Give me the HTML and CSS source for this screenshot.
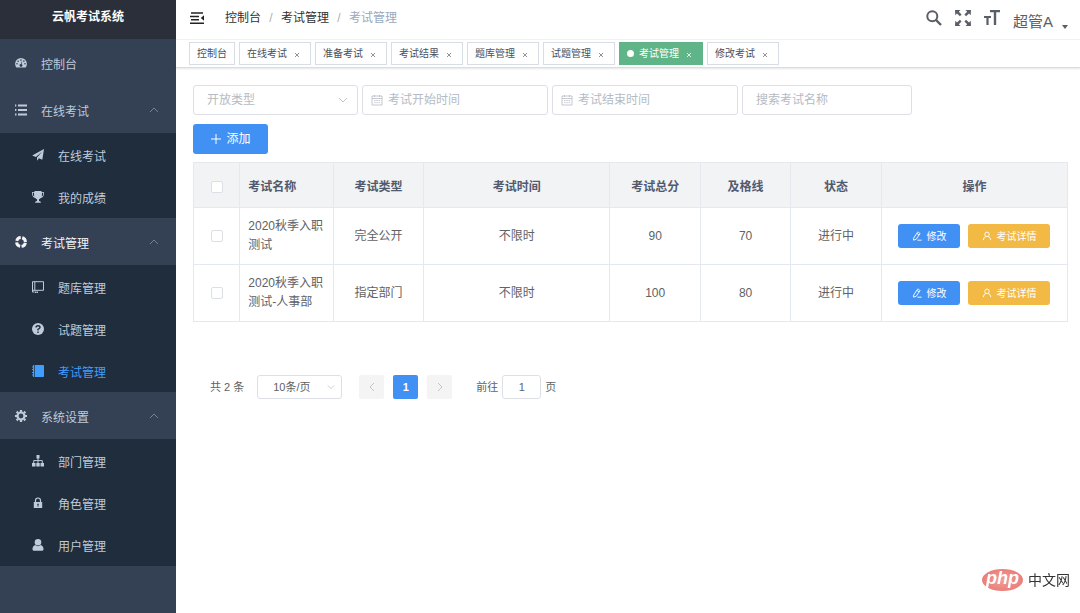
FILE: index.html
```html
<!DOCTYPE html>
<html lang="zh-CN">
<head>
<meta charset="utf-8">
<meta name="viewport" content="width=device-width, initial-scale=1">
<title>云帆考试系统</title>
<link rel="stylesheet" href="styles.css">
</head>
<body>
<svg class="sprite" aria-hidden="true">
  <symbol id="up" viewBox="0 0 10 10"><path d="M1 7l4-4 4 4" fill="none" stroke="currentColor"/></symbol>
  <symbol id="down" viewBox="0 0 10 10"><path d="M1 3l4 4 4-4" fill="none" stroke="currentColor"/></symbol>
  <symbol id="close" viewBox="0 0 6 6"><path d="M1 1l4 4M5 1L1 5" fill="none" stroke="currentColor" stroke-width=".8"/></symbol>
  <symbol id="calendar" viewBox="0 0 12 12"><path d="M1 2h10v9H1zM1 4.500h10M3.500 1v2M8.500 1v2M3 6.500h1.500M5.300 6.500h1.500M7.600 6.500h1.500M3 8.700h1.500M5.300 8.700h1.500M7.600 8.700h1.500" fill="none" stroke="currentColor" stroke-width=".8"/></symbol>
  <symbol id="edit" viewBox="0 0 12 12"><path d="M2 8.500L6.500 1.700q.5-.7 1.300-.2l1.200.8q.8.500.3 1.300L5 10l-3.200 1zM6 3l2.500 1.700M6.500 11H11.500" fill="none" stroke="currentColor" stroke-width="1.100"/></symbol>
  <symbol id="person" viewBox="0 0 12 12"><circle cx="6" cy="4" r="2.700" fill="none" stroke="currentColor" stroke-width="1.100"/><path d="M1.500 11q.3-3.700 3.200-4.500M10.500 11q-.3-3.700-3.200-4.500" fill="none" stroke="currentColor" stroke-width="1.100"/></symbol>
</svg>
<div class="app">
  <aside class="sidebar">
    <h1 class="brand">云帆考试系统</h1>
    <nav>
      <a class="item" href="#">
        <svg class="icon" viewBox="0 0 12 12"><path fill="currentColor" fill-rule="evenodd" d="M1.300 10.500A5.900 5.900 0 1 1 10.700 10.500zM6 2.300a.8.8 0 1 0 0 1.600.8.8 0 0 0 0-1.600M3.200 3.400a.8.8 0 1 0 0 1.600.8.8 0 0 0 0-1.600M2 6a.8.8 0 1 0 0 1.600A.8.8 0 0 0 2 6M10 6a.8.8 0 1 0 0 1.600.8.8 0 0 0 0-1.600M8.900 3.300a.8.8 0 1 0 0 1.600.8.8 0 0 0 0-1.600M7.300 4.600L6.700 4.400 6 7a1.400 1.400 0 1 0 .7.200z"/></svg>
        <span>控制台</span></a>
      <a class="item" href="#">
        <svg class="icon" viewBox="0 0 12 12"><path fill="currentColor" d="M3 .5h9v2H3zM3 5h9v2H3zM3 9.500h9v2H3zM0 .5h1.300v2H0zM0 5h1.500v.7L.8 6.500h.7V7H0zM0 9.500h1.500v2H0z"/></svg>
        <span>在线考试</span><svg class="caret"><use href="#up"/></svg></a>
      <div class="sub">
        <a class="subitem" href="#"><svg class="icon" viewBox="0 0 12 12"><path fill="currentColor" d="M12 0L10.300 10.700 6.900 9.200 5 11.800V8.600L10.300 2.400 3.800 8 .2 6.500z"/></svg><span>在线考试</span></a>
        <a class="subitem" href="#"><svg class="icon" viewBox="0 0 12 12"><path fill="currentColor" d="M2.500 0h7v1H12v2.500Q11.500 6.500 8.500 7.200 7.300 8 7 8.300v1.700q2 .3 2 1.800H3q0-1.500 2-1.800V8.300q-.3-.3-1.500-1.100Q.5 6.500 0 3.500V1h2.500zM.8 1.800v1.700q.3 1.300 1.500 2.100Q2 3.700 2 1.800zM11.200 1.800H10q0 1.900-.3 3.800 1.200-.8 1.500-2.100z"/></svg><span>我的成绩</span></a>
      </div>
      <a class="item open" href="#">
        <svg class="icon" viewBox="0 0 12 12"><circle cx="6" cy="6" r="4.400" fill="none" stroke="currentColor" stroke-width="3" stroke-dasharray="5.400 1.500" stroke-dashoffset="-.75"/></svg>
        <span>考试管理</span><svg class="caret"><use href="#up"/></svg></a>
      <div class="sub">
        <a class="subitem" href="#"><svg class="icon" viewBox="0 0 12 12"><path fill="none" stroke="currentColor" d="M.5.700h11v8.600H.5zM2.800.700v8.600M.5 9v2h2M3.500 10.500v1.500l1-.8 1 .8v-1.500"/></svg><span>题库管理</span></a>
        <a class="subitem" href="#"><svg class="icon" viewBox="0 0 12 12"><circle cx="6" cy="6" r="6" fill="currentColor"/><path fill="none" stroke="#1f2d3d" stroke-width="1.400" d="M4 4.600Q4 2.800 6 2.800T8 4.500Q8 5.500 6 6.300V7.500M6 8.500V10"/></svg><span>试题管理</span></a>
        <a class="subitem current" href="#"><svg class="icon" viewBox="0 0 12 12"><path fill="currentColor" d="M3 0h8q1 0 1 1v10q0 1-1 1H3zM1 0h1.300v12H1V10.500H0V9.500h1V8H0V7h1V5H0V4h1V2.500H0v-1h1z"/></svg><span>考试管理</span></a>
      </div>
      <a class="item" href="#">
        <svg class="icon" viewBox="0 0 12 12"><circle cx="6" cy="6" r="3.500" fill="none" stroke="currentColor" stroke-width="2.200"/><path fill="none" stroke="currentColor" stroke-width="2.200" d="M6 0v2M6 10v2M0 6h2M10 6h2M1.600 1.600l1.400 1.400M9 9l1.400 1.400M1.600 10.400l1.400-1.400M9 3l1.400-1.400"/></svg>
        <span>系统设置</span><svg class="caret"><use href="#up"/></svg></a>
      <div class="sub">
        <a class="subitem" href="#"><svg class="icon" viewBox="0 0 12 12"><path fill="currentColor" d="M4.500 0h3v3.500h-3zM0 8h3.500v3.500H0zM4.300 8h3.400v3.500H4.300zM8.500 8H12v3.500H8.500z"/><path fill="none" stroke="currentColor" d="M6 3v5M1.700 8V5.600h8.600V8"/></svg><span>部门管理</span></a>
        <a class="subitem" href="#"><svg class="icon" viewBox="0 0 12 12"><path fill="none" stroke="currentColor" stroke-width="1.200" d="M3.500 5.500V3.500a2.500 2.500 0 0 1 5 0v2"/><path fill="currentColor" fill-rule="evenodd" d="M1.800 5h8.400v6H1.800zM5.300 6.700v1.200l.3.300v1.500h.8V8.200l.3-.3V6.700z"/></svg><span>角色管理</span></a>
        <a class="subitem" href="#"><svg class="icon" viewBox="0 0 12 12"><circle cx="6" cy="3.300" r="3.300" fill="currentColor"/><path fill="currentColor" d="M3.200 6Q6 8.300 8.800 6 11.700 7.300 11.500 10.500q-.2 1.300-1.500 1.300H2Q.7 11.800.5 10.500.300 7.300 3.200 6"/></svg><span>用户管理</span></a>
      </div>
    </nav>
  </aside>
  <div class="main">
    <header class="topbar">
      <button class="plain" aria-label="收起菜单"><svg class="fold" viewBox="0 0 14 12"><path fill="none" stroke="currentColor" stroke-width="1.600" d="M1 1h12M0 4.500h9M1 7.700h8M0 11.200h14"/><path fill="currentColor" d="M14 3.300v5.400L10.800 6z"/></svg></button>
      <nav class="crumbs"><a href="#">控制台</a><i>/</i><a href="#">考试管理</a><i>/</i><span>考试管理</span></nav>
      <div class="tools">
        <button class="plain" aria-label="搜索"><svg class="tool" viewBox="0 0 16 16"><circle cx="6.300" cy="6.300" r="5" fill="none" stroke="currentColor" stroke-width="2"/><path d="M10 10l5 5" stroke="currentColor" stroke-width="2.400"/></svg></button>
        <button class="plain" aria-label="全屏"><svg class="tool" viewBox="0 0 16 16"><path fill="currentColor" d="M0 0h5.500L3.800 1.700 6.600 4.500 4.900 6.200 2 3.400.300 5.200zM16 0h-5.500l1.700 1.700-2.800 2.800 1.700 1.700L14 3.400l1.700 1.800zM0 16h5.500l-1.700-1.700 2.800-2.800-1.700-1.700L2 12.600.300 10.800zM16 16h-5.500l1.700-1.700-2.800-2.800 1.700-1.700 2.900 2.800 1.700-1.800z"/></svg></button>
        <button class="plain" aria-label="字号"><svg class="tool" viewBox="0 0 16 16"><path fill="currentColor" d="M6 0h10v2.200h-3.800V15H9.800V2.200H6zM0 6h7v2H4.600v7H2.400V8H0z"/></svg></button>
        <button class="plain user">超管A<svg class="drop" viewBox="0 0 6 4"><path fill="currentColor" d="M0 0h6L3 4z"/></svg></button>
      </div>
    </header>
    <nav class="tags">
      <div class="tag"><a href="#">控制台</a></div>
      <div class="tag"><a href="#">在线考试</a><button aria-label="关闭"><svg><use href="#close"/></svg></button></div>
      <div class="tag"><a href="#">准备考试</a><button aria-label="关闭"><svg><use href="#close"/></svg></button></div>
      <div class="tag"><a href="#">考试结果</a><button aria-label="关闭"><svg><use href="#close"/></svg></button></div>
      <div class="tag"><a href="#">题库管理</a><button aria-label="关闭"><svg><use href="#close"/></svg></button></div>
      <div class="tag"><a href="#">试题管理</a><button aria-label="关闭"><svg><use href="#close"/></svg></button></div>
      <div class="tag on"><a href="#">考试管理</a><button aria-label="关闭"><svg><use href="#close"/></svg></button></div>
      <div class="tag"><a href="#">修改考试</a><button aria-label="关闭"><svg><use href="#close"/></svg></button></div>
    </nav>
    <main class="content">
      <form class="filters">
        <div class="field type"><select aria-label="开放类型"><option>开放类型</option></select><svg class="arrow"><use href="#down"/></svg></div>
        <div class="field date"><svg class="cal"><use href="#calendar"/></svg><input type="text" aria-label="考试开始时间" placeholder="考试开始时间"></div>
        <div class="field date"><svg class="cal"><use href="#calendar"/></svg><input type="text" aria-label="考试结束时间" placeholder="考试结束时间"></div>
        <div class="field name"><input type="text" aria-label="搜索考试名称" placeholder="搜索考试名称"></div>
      </form>
      <button class="add"><svg viewBox="0 0 12 12"><path d="M6 1v10M1 6h10" stroke="currentColor"/></svg>添加</button>
      <table class="grid">
        <colgroup><col class="c-check"><col class="c-name"><col class="c-small"><col class="c-wide"><col class="c-small"><col class="c-small"><col class="c-small"><col class="c-wide"></colgroup>
        <thead><tr><th><input type="checkbox" aria-label="全选"></th><th class="left">考试名称</th><th>考试类型</th><th>考试时间</th><th>考试总分</th><th>及格线</th><th>状态</th><th>操作</th></tr></thead>
        <tbody>
          <tr><td><input type="checkbox" aria-label="选择"></td><td class="left">2020秋季入职测试</td><td>完全公开</td><td>不限时</td><td>90</td><td>70</td><td>进行中</td>
            <td><div class="actions"><button class="act edit"><svg><use href="#edit"/></svg>修改</button><button class="act detail"><svg><use href="#person"/></svg>考试详情</button></div></td></tr>
          <tr><td><input type="checkbox" aria-label="选择"></td><td class="left">2020秋季入职测试-人事部</td><td>指定部门</td><td>不限时</td><td>100</td><td>80</td><td>进行中</td>
            <td><div class="actions"><button class="act edit"><svg><use href="#edit"/></svg>修改</button><button class="act detail"><svg><use href="#person"/></svg>考试详情</button></div></td></tr>
        </tbody>
      </table>
      <div class="pager">
        <span>共 2 条</span>
        <div class="field size"><select aria-label="每页条数"><option>10条/页</option></select><svg class="arrow"><use href="#down"/></svg></div>
        <div class="pages">
          <button aria-label="上一页" disabled><svg viewBox="0 0 10 10"><path d="M7 1L3 5l4 4" fill="none" stroke="currentColor"/></svg></button>
          <button class="now">1</button>
          <button aria-label="下一页" disabled><svg viewBox="0 0 10 10"><path d="M3 1l4 4-4 4" fill="none" stroke="currentColor"/></svg></button>
        </div>
        <label class="jump">前往<input type="text" value="1">页</label>
      </div>
    </main>
  </div>
  <div class="mark"><span class="oval">php</span><span>中文网</span></div>
</div>
</body>
</html>
```
FILE: styles.css
```css
* { box-sizing: border-box; }
body {
  margin: 0;
  font: 12px/18px "Liberation Sans", "Noto Sans CJK SC", sans-serif;
  color: #606266;
  background: #fff;
}
a { color: inherit; text-decoration: none; }
button, input, select { font: inherit; color: inherit; margin: 0; }
button { border: 0; padding: 0; background: none; cursor: pointer; }
svg { display: block; flex: none; }
.sprite { position: absolute; width: 0; height: 0; }
.app { display: flex; min-height: 100vh; }

.sidebar { flex: 0 0 176px; background: #344054; color: #bfcbd9; }
.brand {
  margin: 0;
  height: 39px;
  font-size: 12px;
  line-height: 35px;
  text-align: center;
  color: #fff;
  background: #2b2f3a;
}
.item, .subitem { display: flex; align-items: center; gap: 14px; }
.item { height: 47px; padding: 4px 17px 0 15px; }
.subitem { height: 42px; padding: 5px 17px 0 32px; }
.item.open { color: #f4f4f5; }
.subitem.current { color: #409eff; }
.sub { background: #1f2d3d; padding-bottom: 1px; }
.icon { width: 12px; height: 12px; margin-bottom: 4px; }
.caret { width: 10px; height: 10px; margin: 0 0 4px auto; color: #74808f; }

.main { flex: 1; min-width: 0; }
.topbar {
  display: flex;
  align-items: center;
  height: 40px;
  padding: 0 12px 4px 14px;
  border-bottom: 1px solid #f0f2f4;
}
.plain { display: flex; align-items: center; }
.fold { width: 14px; height: 12px; color: #222; }
.crumbs { display: flex; margin-left: 21px; color: #303133; }
.crumbs i { width: 20px; text-align: center; font-style: normal; color: #a9adb6; }
.crumbs span { color: #97a8be; }
.tools { display: flex; align-items: center; gap: 13px; margin-left: auto; color: #5a5e66; }
.tool { width: 16px; height: 16px; }
.user { gap: 9px; font-size: 15px; line-height: 20px; padding-top: 8px; }
.drop { width: 6px; height: 4px; margin-top: 10px; }

.tags {
  display: flex;
  gap: 4px;
  height: 28px;
  padding: 2px 13px;
  border-bottom: 1px solid #d8dce5;
  box-shadow: 0 1px 2px #0000001a;
}
.tag {
  display: flex;
  align-items: center;
  height: 23px;
  padding: 0 7px;
  border: 1px solid #d8dce5;
  font-size: 10px;
  color: #495060;
}
.tag button { width: 12px; margin-left: 4px; padding: 2px 3px 0; color: #777; }
.tag button svg { width: 6px; height: 6px; }
.tag.on { color: #fff; background: #5fb588; border-color: #5fb588; }
.tag.on::before { content: ""; width: 7px; height: 7px; margin-right: 5px; border-radius: 50%; background: #fff; }
.tag.on button { color: #fff; }

.content { padding: 17px 12px 17px 17px; }
.filters { display: flex; flex-wrap: wrap; gap: 4px; }
.field {
  display: flex;
  align-items: center;
  height: 30px;
  border: 1px solid #dcdfe6;
  border-radius: 3px;
  background: #fff;
}
.field input, .field select { flex: 1; min-width: 0; border: 0; padding: 0; outline: 0; background: none; appearance: none; }
.field input::placeholder { color: #b6bac2; opacity: 1; }
.field.type { width: 165px; padding: 0 9px 0 13px; color: #b6bac2; }
.field.date { width: 186px; padding: 0 8px; gap: 5px; color: #b6bac2; }
.field.name { width: 170px; padding: 0 13px; }
.arrow { width: 10px; height: 10px; color: #c0c4cc; }
.cal { width: 12px; height: 12px; }
.add {
  display: flex;
  align-items: center;
  justify-content: center;
  gap: 4px;
  width: 75px;
  height: 30px;
  margin: 9px 0 8px;
  border-radius: 3px;
  color: #fff;
  background: #4191f4;
}
.add svg { width: 12px; height: 12px; }

.grid { width: 100%; table-layout: fixed; border-collapse: collapse; }
.grid th, .grid td { border: 1px solid #e4e8ef; padding: 0 8px; text-align: center; line-height: 19px; }
.grid th { height: 45px; background: #f1f3f5; color: #515a6e; font-weight: bold; padding-top: 4px; }
.grid td { height: 57px; }
.grid .left { text-align: left; }
.c-check { width: 5.3%; }
.c-name { width: 10.7%; }
.c-small { width: 10.35%; }
.c-wide { width: 21.3%; }
.grid input {
  display: block;
  appearance: none;
  width: 12px;
  height: 12px;
  margin: 0 auto;
  border: 1px solid #dcdfe6;
  border-radius: 2px;
  background: #fff;
}
.actions { display: flex; justify-content: center; gap: 8px; }
.act {
  display: flex;
  align-items: center;
  justify-content: center;
  gap: 4px;
  height: 24px;
  padding: 0 14px;
  border-radius: 3px;
  font-size: 10px;
  color: #fff;
}
.act svg { width: 10px; height: 10px; }
.act.edit { background: #4191f4; }
.act.detail { background: #f2b945; }

.pager { display: flex; align-items: center; margin-top: 53px; padding-left: 17px; font-size: 11px; }
.field.size { width: 85px; height: 24px; margin-left: 13px; padding: 0 6px 0 15px; }
.size .arrow { width: 8px; height: 8px; }
.pages { display: flex; gap: 9px; margin: 0 24px 0 17px; }
.pages button {
  display: flex;
  align-items: center;
  justify-content: center;
  width: 25px;
  height: 24px;
  border-radius: 2px;
  background: #f4f4f5;
  color: #c0c4cc;
}
.pages svg { width: 10px; height: 10px; }
.pages .now { background: #4191f4; color: #fff; font-weight: bold; }
.jump { display: flex; align-items: center; gap: 4px; }
.jump input { width: 39px; height: 24px; border: 1px solid #dcdfe6; border-radius: 3px; text-align: center; }

.mark { position: fixed; right: 10px; bottom: 22px; display: flex; align-items: center; gap: 5px; font-size: 14px; line-height: 22px; color: #333; }
.oval {
  width: 41px;
  height: 22px;
  border-radius: 50%;
  background: radial-gradient(#f2a09a, #e8706c);
  color: #fff;
  font-size: 18px;
  font-weight: bold;
  line-height: 19px;
  font-style: italic;
  text-align: center;
}
```
